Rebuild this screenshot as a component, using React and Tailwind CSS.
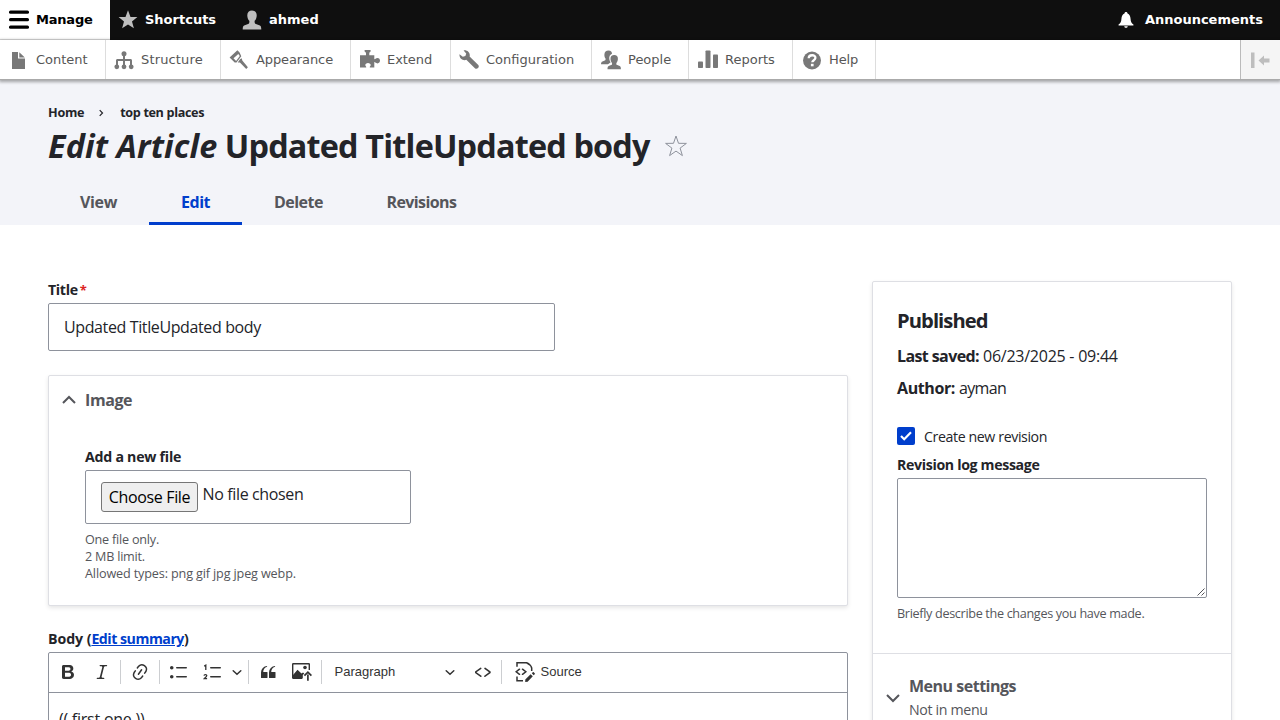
import React from 'react';

function Svg({ children, className = 'size-5', vb = '0 0 20 20' }) {
  return (
    <svg viewBox={vb} className={`shrink-0 ${className}`} fill="currentColor" aria-hidden="true">
      {children}
    </svg>
  );
}

const personPath =
  'M10 .5c3 0 4.900 2 4.700 5.200-.1 2.200-.9 4-2 5.100-.3 1.600.1 2.700 1.200 3.200l4 1.500c1 .4 1.400 1.800 1.400 4H.7c0-2.200.4-3.600 1.400-4l4-1.500c1.100-.5 1.500-1.600 1.200-3.200-1.100-1.100-1.900-2.900-2-5.100C5.100 2.500 7 .5 10 .5z';

const trayItems = [
  {
    label: 'Content', width: 'w-[106px] pl-2', text: 'ml-2 tracking-[0px]',
    icon: <path d="M4 2h6v6.500h7V19H4zM11.300 2.300 16.800 7.500h-5.500z" />,
  },
  {
    label: 'Structure', width: 'w-[115px] pl-2', text: 'ml-[7px] tracking-[0.15px]',
    icon: (
      <>
        <circle cx="10" cy="3.800" r="2.500" />
        <path d="M9 5h2v4h5.500c.9 0 1.500.7 1.500 1.500V15h-2v-4h-5v4H9v-4H4v4H2v-4.500C2 9.700 2.600 9 3.500 9H9z" />
        <circle cx="2.800" cy="16.800" r="2.400" />
        <circle cx="10" cy="16.800" r="2.400" />
        <circle cx="17.200" cy="16.800" r="2.400" />
      </>
    ),
  },
  {
    label: 'Appearance', width: 'w-[130px] pl-2', text: 'ml-[7px] tracking-[-0.1px]',
    icon: (
      <>
        <path fillRule="evenodd" d="M.6 7.400 8.400.3l2.200 2.100 1.700 3.800-4.800 6.400-1.800 0zM6.800 6.300 4.500 8.200l2.600 2.700 3.700-4.900-1.500-2z" />
        <path d="m11 9.300 1.700-1 .6 2.300 5.600 6.700-1.700 1.600-6.300-6.300-2.200-.2z" />
      </>
    ),
  },
  {
    label: 'Extend', width: 'w-[100px] pl-[9px]', text: 'ml-[7px] tracking-[-0.05px]',
    icon: (
      <path d="M4.600 0h6v1.500L9.300 2.800v2.400h5v4c.9.200 1.300-1.300 3.200-1.300 1.600 0 2.500 1.200 2.500 2.700s-.9 2.800-2.500 2.800c-1.800 0-2.300-1.500-3.200-1.300v5.500H9.800c-.3-1.100.9-1.300.9-2.500S9.600 12.900 8 12.900s-2.700 1-2.700 2.200 1.200 1.400.9 2.500H0V5.200h6V2.800L4.600 1.500z" />
    ),
  },
  {
    label: 'Configuration', width: 'w-[141px] pl-2', text: 'ml-[7px] tracking-[0px]',
    icon: (
      <path d="M4.600.4c3.800-.7 7 2.600 6 6.100l8.700 8.400c1.700 2-1.300 5.200-3.400 3.400L7.300 9.800C4 11.200 0 8.300.5 4.300l3.300 2.500 2.600-.8.800-2.400z" />
    ),
  },
  {
    label: 'People', width: 'w-[97px] pl-[9px]', text: 'ml-[7px] tracking-[0px]',
    icon: (
      <>
        <path d="M7.500.4c2.500 0 3.500 1.700 3.500 3.300-2.200.9-3 3-2.700 5.300.2 1.500.8 2.600 1.400 3.300L7 14.300 0 14.200c0-1.700.5-2.400 1.500-2.800l2.300-.9c.8-.4.9-1.100.7-2C3.700 7.700 3.300 5.900 3.400 4.400 3.500 1.900 5 .4 7.500.4z" />
        <path d="M13.200 5c2.400 0 3.900 1.500 3.700 4-.1 1.600-.7 3-1.500 3.900-.2 1.200.1 1.900.9 2.200l2.400.9c.9.4 1.200 1.300 1.200 3.200H6.500c0-1.900.3-2.800 1.200-3.200l2.400-.9c.8-.3 1.100-1 .9-2.200-.8-.9-1.400-2.300-1.500-3.900-.2-2.500 1.300-4 3.700-4z" />
      </>
    ),
  },
  {
    label: 'Reports', width: 'w-[104px] pl-[9px]', text: 'ml-[7px] tracking-[0px]',
    icon: (
      <>
        <rect y="11.500" width="5" height="6.500" rx=".8" />
        <rect x="7.500" y=".5" width="5" height="17.500" rx=".8" />
        <rect x="15" y="4.500" width="5" height="13.500" rx=".8" />
      </>
    ),
  },
  {
    label: 'Help', width: 'w-[83px] pl-[9px]', text: 'ml-[7px] tracking-[-0.1px]',
    icon: (
      <>
        <circle cx="10" cy="10.500" r="9" />
        <path d="M6.700 8.300c0-4 6.900-4 6.700-.3-.1 2.200-3.100 2.200-3.100 4.300" fill="none" stroke="#fff" strokeWidth="2.300" />
        <rect x="8.900" y="13.800" width="2.700" height="2.500" fill="#fff" />
      </>
    ),
  },
];

function Chevron({ className }) {
  return (
    <svg viewBox="0 0 14 14" className={`shrink-0 ${className}`} fill="none" stroke="currentColor" strokeWidth="2" aria-hidden="true">
      <path d="m1 4 6 6 6-6" />
    </svg>
  );
}

function SmallArrow() {
  return (
    <svg viewBox="0 0 10 10" className="size-[10px] shrink-0" fill="none" stroke="#333" strokeWidth="1.500" strokeLinecap="round" aria-hidden="true">
      <path d="m1.200 3.700 3.800 3.500 3.800-3.500" />
    </svg>
  );
}

function Sep({ className }) {
  return <span className={`h-6 w-px shrink-0 bg-[#ccced1] ${className}`} />;
}

function Slot({ children }) {
  return <button className="flex h-8 w-[34px] shrink-0 items-center justify-center">{children}</button>;
}

function AdminBar() {
  return (
    <nav className="flex h-10 bg-[#0f0f0f] font-['DejaVu_Sans',Verdana,sans-serif] text-[13px] leading-[39px] font-bold text-white">
      <a className="flex h-10 w-[110px] items-center border-b border-[#ddd] bg-white pl-[9px] text-black">
        <Svg>
          <rect y=".5" width="20" height="3.300" rx="1.500" />
          <rect y="8" width="20" height="3.300" rx="1.500" />
          <rect y="15.500" width="20" height="3.300" rx="1.500" />
        </Svg>
        <span className="ml-[7px] tracking-[-0.2px]">Manage</span>
      </a>
      <a className="flex h-[39px] w-[125px] items-center pl-2 text-[#bebebe]">
        <Svg>
          <path d="m10 .2 2.500 6.700 6.900.2-5.400 4.300 1.900 6.900L10 14.500l-5.900 3.800L6 11.400.6 7.100l6.900-.2z" />
        </Svg>
        <span className="ml-[7px] text-white">Shortcuts</span>
      </a>
      <a className="flex h-[39px] items-center pl-[7px] text-[#bebebe]">
        <Svg><path d={personPath} /></Svg>
        <span className="ml-[7px] text-white">ahmed</span>
      </a>
      <a className="ml-auto flex h-[39px] items-center pr-[17px]">
        <Svg className="size-4">
          <path d="M10 0c1.200 0 1.900.8 1.900 1.900 2.500.9 3.600 3.300 3.800 6.500.2 4 1.100 5.600 3.600 7.300V17H.7v-1.300c2.500-1.700 3.400-3.300 3.600-7.300.2-3.200 1.300-5.600 3.800-6.500C8.100.8 8.800 0 10 0zM7.800 17.800h4.400c-.2 1.400-1 2-2.200 2s-2-.6-2.200-2z" />
        </Svg>
        <span className="ml-[11px]">Announcements</span>
      </a>
    </nav>
  );
}

function Tray() {
  return (
    <nav className="relative z-10 flex h-10 border-b border-[#aaa] bg-white font-['DejaVu_Sans',Verdana,sans-serif] text-[13px] leading-[39px] text-[#565656] shadow-[0_1px_3px_1px_rgba(0,0,0,0.33)]">
      {trayItems.map((item) => (
        <a key={item.label} className={`flex shrink-0 items-center border-r border-[#ddd] ${item.width}`}>
          <Svg className="size-5 text-[#787878]">{item.icon}</Svg>
          <span className={item.text}>{item.label}</span>
        </a>
      ))}
      <button className="ml-auto flex w-10 items-center border-l border-[#bbb] bg-[#f5f5f5] pl-[10px] text-[#bebebe]">
        <Svg>
          <rect y="2.500" width="3.500" height="15.500" />
          <path d="m7.500 10.500 5.500-5v3h5.500v4H13v3z" />
        </Svg>
      </button>
    </nav>
  );
}

function PageHeader() {
  return (
    <header className="flex h-[145px] flex-col bg-[#f3f4f9] px-12">
      <div className="mt-[23px] flex h-[18px] items-center text-[12.640px] leading-[18px] font-bold text-[#232429]">
        <span className="tracking-[-0.280px]">Home</span>
        <svg viewBox="0 0 6 8" className="mt-px ml-[15px] h-2 w-[6px]" fill="none" stroke="#232429" strokeWidth="1.200">
          <path d="m.7 1.200 2.800 2.800L.7 6.800" />
        </svg>
        <span className="ml-[15px] tracking-[-0.350px]">top ten places</span>
      </div>
      <div className="mt-[2px] flex h-11 items-center">
        <h1 className="text-[32.400px] leading-[44px] font-bold tracking-[-0.830px] whitespace-nowrap text-[#232429]">
          <em className="tracking-[0.080px]">Edit Article</em> Updated TitleUpdated body
        </h1>
        <svg viewBox="0 0 22 22" className="ml-[15px] mt-[2px] size-[22px]" fill="none" stroke="#8e929c" strokeWidth="1">
          <path d="m11 1 2.500 7.300 7.900.1-6.300 4.700 2.300 7.500L11 16.100l-6.400 4.500 2.300-7.500L.6 8.400l7.900-.1z" />
        </svg>
      </div>
      <div className="mt-auto flex h-11 text-base leading-[42px] font-bold text-[#55565b]">
        <a className="w-[101px] px-8 tracking-[-0.350px]">View</a>
        <a className="w-[93px] border-b-[3px] border-[#003ecc] px-8 tracking-[-0.450px] text-[#003ecc]">Edit</a>
        <a className="w-[112.500px] px-8 tracking-[-0.530px]">Delete</a>
        <a className="px-8 tracking-[-0.600px]">Revisions</a>
      </div>
    </header>
  );
}

function EditorToolbar() {
  return (
    <div className="flex h-10 items-center border-b border-[#8e929c] pb-px pl-[2px] text-[#333]">
      <Slot>
        <Svg>
          <path d="M10.187 17H5.773c-.637 0-1.092-.138-1.364-.415-.273-.277-.409-.718-.409-1.323V4.738c0-.617.14-1.062.419-1.332.279-.27.73-.406 1.354-.406h4.680c.69 0 1.288.041 1.793.124.506.083.96.242 1.360.478.341.197.644.447.906.75a3.262 3.262 0 0 1 .808 2.162c0 1.401-.722 2.426-2.167 3.075C15.050 10.175 16 11.315 16 13.010a3.756 3.756 0 0 1-2.296 3.504 6.100 6.100 0 0 1-1.517.377c-.571.073-1.238.11-2 .11zm-.217-6.217H7v4.087h3.069c1.977 0 2.965-.69 2.965-2.072 0-.707-.256-1.220-.768-1.537-.512-.319-1.277-.478-2.296-.478zM7 5.130v3.619h2.606c.729 0 1.292-.067 1.690-.2a1.600 1.600 0 0 0 .91-.765c.165-.267.247-.566.247-.897 0-.707-.26-1.176-.778-1.409-.519-.232-1.310-.348-2.375-.348H7z" />
        </Svg>
      </Slot>
      <Slot>
        <Svg>
          <path d="m9.586 14.633.021.004c-.036.335.095.655.393.962.082.083.173.15.274.201h1.474a.6.6 0 1 1 0 1.200H5.304a.6.6 0 0 1 0-1.200h1.150c.474-.07.809-.182 1.005-.334.157-.122.291-.32.404-.597l2.416-9.550a1.053 1.053 0 0 0-.281-.823 1.120 1.120 0 0 0-.442-.296H8.150a.6.6 0 0 1 0-1.200h6.443a.6.6 0 1 1 0 1.200h-1.195c-.376.056-.65.155-.823.296-.215.175-.423.439-.623.79l-2.366 9.347z" />
        </Svg>
      </Slot>
      <Sep className="ml-px mr-[2px]" />
      <Slot>
        <Svg>
          <path d="m11.077 15 .991-1.416a.75.75 0 1 1 1.229.86l-1.148 1.640a.748.748 0 0 1-.217.206 5.251 5.251 0 0 1-8.503-5.955.741.741 0 0 1 .12-.274l1.147-1.639a.75.75 0 1 1 1.228.86L4.933 10.700l.006.003a3.750 3.750 0 0 0 6.132 4.294l.006.004zm5.494-5.335a.748.748 0 0 1-.12.274l-1.147 1.639a.75.75 0 1 1-1.228-.86l.86-1.230a3.750 3.750 0 0 0-6.144-4.301l-.86 1.229a.75.75 0 0 1-1.229-.86l1.148-1.640a.748.748 0 0 1 .217-.206 5.251 5.251 0 0 1 8.503 5.955zm-4.563-2.532a.75.75 0 0 1 .184 1.045l-3.155 4.505a.75.75 0 1 1-1.229-.86l3.155-4.506a.75.75 0 0 1 1.045-.184z" />
        </Svg>
      </Slot>
      <Sep className="ml-[2px] mr-[2px]" />
      <Slot>
        <Svg>
          <path d="M7 5.750c0 .414.336.75.75.75h9.500a.75.75 0 1 0 0-1.500h-9.500a.75.75 0 0 0-.75.75zm-6 0C1 4.784 1.777 4 2.750 4c.966 0 1.750.777 1.750 1.750 0 .966-.777 1.750-1.750 1.750C1.784 7.500 1 6.723 1 5.750zm6 9c0 .414.336.75.75.75h9.500a.75.75 0 1 0 0-1.500h-9.500a.75.75 0 0 0-.75.75zm-6 0c0-.966.777-1.750 1.750-1.750.966 0 1.750.777 1.750 1.750 0 .966-.777 1.750-1.750 1.750-.966 0-1.750-.777-1.750-1.750z" />
        </Svg>
      </Slot>
      <Slot>
        <Svg>
          <path d="M7 5.750c0 .414.336.75.75.75h9.500a.75.75 0 1 0 0-1.500h-9.500a.75.75 0 0 0-.75.75zM7 14.750c0 .414.336.75.75.75h9.500a.75.75 0 1 0 0-1.500h-9.500a.75.75 0 0 0-.75.75z" />
          <path d="M1.200 4.100 2.800 3.200V8M1 13.700c.2-1.600 2.900-1.500 2.700.1-.1 1-1.600 1.700-2.500 2.900h2.900" fill="none" stroke="currentColor" strokeWidth="1.300" />
        </Svg>
      </Slot>
      <span className="flex w-[14px] shrink-0 justify-center"><SmallArrow /></span>
      <Sep className="ml-[4px] mr-[2px]" />
      <Slot>
        <Svg>
          <path d="M3 10.423a6.500 6.500 0 0 1 6.056-6.408l.038.67C6.448 5.423 5.354 7.663 5.220 10H9c.552 0 .5.432.5.986v4.511c0 .554-.448.503-1 .503h-5c-.552 0-.5-.449-.5-1.003v-4.574zm8 0a6.500 6.500 0 0 1 6.056-6.408l.038.67c-2.646.739-3.740 2.979-3.873 5.315H17c.552 0 .5.432.5.986v4.511c0 .554-.448.503-1 .503h-5c-.552 0-.5-.449-.5-1.003v-4.574z" />
        </Svg>
      </Slot>
      <Slot>
        <Svg>
          <path d="M10 16.300H1.200c-.4 0-.5-.2-.5-.5V2.200c0-.3.200-.5.500-.5h15.600c.3 0 .5.200.5.500V8" fill="none" stroke="currentColor" strokeWidth="1.400" />
          <path d="M1 13 5.500 7.800l4 3.800L11 10.500l1.300 1L10.800 13v3.500H1z" />
          <circle cx="13" cy="5.500" r="1.800" />
          <path d="M15.900 18.700v-6.200M12.400 13.700l3.500-3.500 3.500 3.500" fill="none" stroke="currentColor" strokeWidth="1.700" />
        </Svg>
      </Slot>
      <Sep className="ml-[2px]" />
      <button className="flex w-[144px] shrink-0 items-center justify-between pr-[11px] pl-[12.500px] font-['Liberation_Sans',Arial,sans-serif] text-[13px]">
        <span>Paragraph</span>
        <SmallArrow />
      </button>
      <Slot>
        <Svg>
          <path d="m12.500 5.700 5.200 3.900v1.300l-5.600 4c-.1.200-.3.200-.5.200-.3-.1-.6-.7-.6-1l.3-.4 4.700-3.500L11.500 7l-.2-.2c-.1-.3-.1-.6 0-.8.200-.2.500-.4.800-.4a.8.8 0 0 1 .4.100zm-5.200 0L2 9.600v1.300l5.600 4c.1.200.3.200.5.200.3-.1.7-.7.6-1 0-.1 0-.3-.2-.4l-5-3.500L8.200 7l.2-.2c.1-.3.1-.6 0-.8-.2-.2-.5-.4-.8-.4a.8.8 0 0 0-.3.1z" />
        </Svg>
      </Slot>
      <Sep className="ml-px mr-[13px]" />
      <Svg>
        <g fill="none" stroke="currentColor" strokeWidth="1.500">
          <path d="M2 4.800V.8h9.600c2.700 1.200 4.400 2.800 5.100 5.200v3M2 14.500v4.200h6" />
          <path d="M4.500 7.200 1.200 9.750l3.300 2.550M7.500 7.200l3.300 2.550-3.300 2.550" strokeLinecap="round" />
        </g>
        <path d="m15.600 12.200 2.200 2.100-5.200 5.400-2.400.2.100-2.300zM17.800 10.300c.3-.3.6-.3.9 0l1 1c.3.300.3.600 0 .9l-1 1-1.900-1.900z" />
      </Svg>
      <span className="ml-[5.500px] font-['Liberation_Sans',Arial,sans-serif] text-[13px]">Source</span>
    </div>
  );
}

function MainColumn() {
  return (
    <main className="w-[800px] shrink-0">
      <label className="flex h-[22px] items-start text-[14.200px] leading-[18px] font-bold text-[#232429]">
        <span className="tracking-[-0.350px]">Title</span>
        <span className="ml-[2px] text-[13px] text-[#dc2323]">*</span>
      </label>
      <div className="h-12 w-[507px] rounded-[2px] border border-[#8e929c] bg-white px-[15px] text-base leading-[47px] tracking-[-0.380px] text-[#232429]">
        Updated TitleUpdated body
      </div>

      <section className="mt-6 h-[231px] rounded-[2px] border border-[#dedfe4] bg-white shadow-[0_2px_4px_rgba(0,0,0,0.1)]">
        <div className="flex h-12 items-center pl-[13px] text-[#55565b]">
          <Chevron className="size-[14px] rotate-180" />
          <h2 className="ml-[9px] text-base leading-6 font-bold tracking-[-0.400px]">Image</h2>
        </div>
        <div className="pt-[23px] pl-9">
          <div className="h-[23px] text-[14.200px] leading-[19px] font-bold tracking-[-0.260px] text-[#232429]">Add a new file</div>
          <div className="flex h-[54px] w-[326px] items-start rounded-[2px] border border-[#8e929c] pt-[11px] pl-[15px] text-base text-[#232429]">
            <button className="h-[30px] w-[97px] rounded-[3px] border border-[#767676] bg-[#efefef] text-center leading-[28px] tracking-[-0.360px] text-black">
              Choose File
            </button>
            <span className="ml-[4.500px] leading-[24px] tracking-[-0.360px]">No file chosen</span>
          </div>
          <div className="mt-[7px] text-[12.640px] leading-[17px] text-[#55565b]">
            <p className="tracking-[-0.220px]">One file only.</p>
            <p className="tracking-[-0.220px]">2 MB limit.</p>
            <p className="tracking-[-0.140px]">Allowed types: png gif jpg jpeg webp.</p>
          </div>
        </div>
      </section>

      <div className="mt-6 h-[22px] text-[14.200px] leading-[18px] font-bold text-[#232429]">
        <span className="tracking-[-0.080px]">Body (</span>
        <a className="tracking-[-0.490px] text-[#003ecc] underline">Edit summary</a>
        <span>)</span>
      </div>
      <div className="rounded-t-[2px] border border-[#8e929c]">
        <EditorToolbar />
        <div className="h-16 px-[10px] pt-[14px] text-base leading-6 tracking-[-0.240px] text-[#232429]">(( first one ))</div>
      </div>
    </main>
  );
}

function Sidebar() {
  return (
    <aside className="h-[500px] w-[360px] shrink-0 rounded-[2px] border border-[#dedfe4] bg-white text-[#232429] shadow-[0_2px_4px_rgba(0,0,0,0.1)]">
      <div className="h-[372px] border-b border-[#dedfe4] px-6 pt-[25px]">
        <h3 className="h-[26px] text-[20.200px] leading-[26px] font-bold tracking-[-0.940px]">Published</h3>
        <p className="mt-[11px] text-base leading-6">
          <b className="tracking-[-0.600px]">Last saved:</b>
          <span className="ml-[4px] tracking-[-0.250px]">06/23/2025 - 09:44</span>
        </p>
        <p className="mt-2 text-base leading-6">
          <b className="tracking-[-0.400px]">Author:</b>
          <span className="ml-[4px] tracking-[-0.650px]">ayman</span>
        </p>
        <label className="mt-[26px] flex h-[20px] items-center">
          <span className="flex size-[18px] items-center justify-center rounded-[2px] bg-[#003ecc]">
            <svg viewBox="0 0 12 10" className="h-[10px] w-3" fill="none" stroke="#fff" strokeWidth="2.200">
              <path d="m1 5 3.200 3.200L11 1.200" />
            </svg>
          </span>
          <span className="mt-[2px] ml-[9px] text-[14.200px] leading-[18px] tracking-[-0.400px]">Create new revision</span>
        </label>
        <div className="mt-[10px] h-[22px] text-[14.200px] leading-[18px] font-bold tracking-[-0.350px]">Revision log message</div>
        <div className="flex h-[120px] w-[310px] items-end justify-end rounded-[2px] border border-[#8e929c] p-px">
          <svg viewBox="0 0 8 8" className="size-2" fill="none" stroke="#55565b" strokeWidth="1">
            <path d="M.5 7.500l7-7M4.500 7.500l3-3" />
          </svg>
        </div>
        <p className="mt-[7px] text-[12.640px] leading-[17px] tracking-[-0.330px] text-[#55565b]">Briefly describe the changes you have made.</p>
      </div>
      <div className="flex items-center pt-5 pl-[13px] text-[#55565b]">
        <Chevron className="size-[14px]" />
        <div className="ml-[9px]">
          <h4 className="text-base leading-6 font-bold tracking-[-0.490px]">Menu settings</h4>
          <p className="pt-px text-[14.200px] leading-[22px] tracking-[-0.350px]">Not in menu</p>
        </div>
      </div>
    </aside>
  );
}

export default function App() {
  return (
    <div className="h-[720px] w-[1280px] overflow-hidden bg-white font-['Open_Sans','Segoe_UI','Noto_Sans',sans-serif]">
      <AdminBar />
      <Tray />
      <PageHeader />
      <div className="mt-14 flex gap-6 px-12">
        <MainColumn />
        <Sidebar />
      </div>
    </div>
  );
}
